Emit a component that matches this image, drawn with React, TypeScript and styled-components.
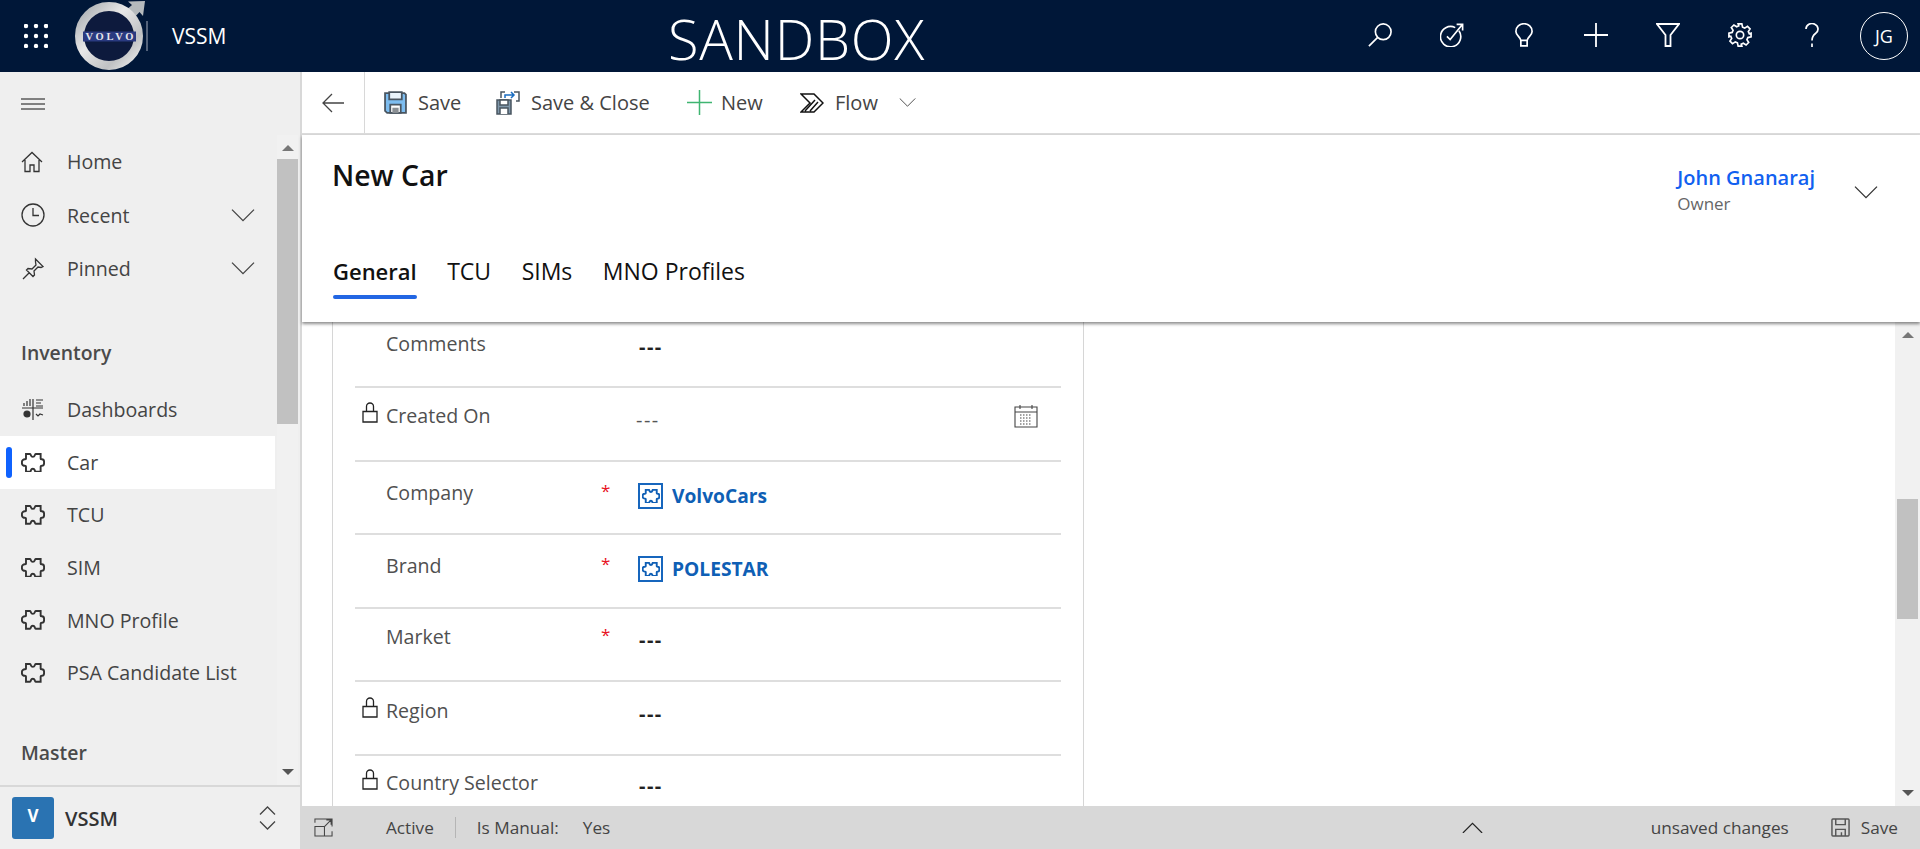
import React from 'react';
import styled, { createGlobalStyle } from 'styled-components';

const FONT = '"Open Sans", "Noto Sans", "Liberation Sans", sans-serif';

const GlobalStyle = createGlobalStyle`
  html, body, #root {
    margin: 0;
    height: 100%;
    overflow: hidden;
  }
  body {
    font-family: ${FONT};
    color: #333;
  }
  * {
    box-sizing: border-box;
  }
`;

const Page = styled.div`
  height: 849px;
  display: flex;
  flex-direction: column;
`;

/* top bar */
const TopBar = styled.header`
  height: 72px;
  flex: none;
  display: flex;
  align-items: center;
  background-color: #001738;
  color: #fff;
`;

const Waffle = styled.svg`
  width: 24px;
  height: 24px;
  margin-left: 24px;
  flex: none;
`;

const LogoMark = styled.svg`
  width: 74px;
  height: 72px;
  margin-left: 26px;
  flex: none;
`;

const TopDivider = styled.div`
  width: 2px;
  height: 30px;
  margin-left: -2px;
  background-color: #53627a;
  flex: none;
`;

const AppName = styled.div`
  margin-left: 24px;
  font-size: 21px;
  width: 133px;
  flex: none;
`;

const Environment = styled.div`
  font-size: 56px;
  font-weight: 300;
  line-height: 64px;
  letter-spacing: 0.7px;
  flex: none;
  margin-left: 363px;
  margin-top: 4px;
`;

const TopActions = styled.div`
  margin-left: auto;
  display: flex;
  align-items: center;
  padding-right: 12px;
`;

const TopAction = styled.div`
  width: 72px;
  height: 72px;
  display: flex;
  align-items: center;
  justify-content: center;
  padding-bottom: 3px;
`;

const Avatar = styled.div`
  width: 48px;
  height: 48px;
  margin-left: 12px;
  border: 1px solid #fff;
  border-radius: 50%;
  display: flex;
  align-items: center;
  justify-content: center;
  font-size: 18px;
`;

const Glyph = styled.svg`
  flex: none;
  fill: none;
  stroke: currentColor;
  stroke-width: 1.3;
  display: block;
`;

/* body */
const Body = styled.div`
  flex: 1;
  min-height: 0;
  display: flex;
`;

const Sidebar = styled.aside`
  width: 302px;
  flex: none;
  display: flex;
  flex-direction: column;
  background-color: #efefef;
  border-right: 2px solid #d8d8d8;
`;

const MenuButton = styled.div`
  height: 63px;
  flex: none;
  padding: 26px 0 0 21px;
  color: #111;
`;

const SideScroll = styled.div`
  flex: 1;
  min-height: 0;
  display: flex;
  overflow: hidden;
`;

const NavList = styled.nav`
  width: 275px;
  flex: none;
`;

const NavRow = styled.div<{ $active?: boolean; $height: number }>`
  height: ${(props) => props.$height}px;
  display: flex;
  align-items: center;
  position: relative;
  padding: 0 0 0 21px;
  font-size: 19.6px;
  color: #444;
  background-color: ${(props) => (props.$active ? '#fff' : 'transparent')};

  ${(props) =>
    props.$active &&
    `&::before {
      content: '';
      position: absolute;
      left: 6px;
      top: 11px;
      width: 6px;
      height: 31px;
      border-radius: 3px;
      background-color: #0f62fe;
    }`}
`;

const NavIcon = styled.span`
  width: 46px;
  flex: none;
  color: #333;
`;

const NavChevron = styled.span`
  margin-left: auto;
  margin-right: 20px;
  color: #444;
`;

const NavSection = styled.div<{ $top: number; $bottom?: number }>`
  margin-top: ${(props) => props.$top}px;
  margin-bottom: ${(props) => props.$bottom || 0}px;
  padding-left: 21px;
  height: 41px;
  display: flex;
  align-items: center;
  font-size: 19.4px;
  font-weight: 600;
  color: #4a4a4a;
`;

const Track = styled.div<{ $width: number; $side: number }>`
  width: ${(props) => props.$width}px;
  margin-left: ${(props) => props.$side}px;
  flex: none;
  display: flex;
  flex-direction: column;
  align-items: center;
  background-color: #f1f1f1;
`;

const TrackArrow = styled.div<{ $down?: boolean }>`
  flex: none;
  width: 0;
  height: 0;
  margin: ${(props) => (props.$down ? '0 0 10px' : '10px 0 0')};
  border-left: 6px solid transparent;
  border-right: 6px solid transparent;
  ${(props) =>
    props.$down ? 'border-top: 6px solid #555;' : 'border-bottom: 6px solid #777;'}
`;

const TrackLane = styled.div<{ $top: number }>`
  flex: 1;
  align-self: stretch;
  padding-top: ${(props) => props.$top}px;
`;

const TrackThumb = styled.div<{ $height: number; $inset: number }>`
  height: ${(props) => props.$height}px;
  margin: 0 ${(props) => props.$inset}px;
  background-color: #c1c1c1;
`;

const AreaSwitcher = styled.div`
  height: 64px;
  flex: none;
  display: flex;
  align-items: center;
  padding: 0 24px 0 12px;
  border-top: 2px solid #d8d8d8;
`;

const AreaBadge = styled.div`
  width: 42px;
  height: 42px;
  border-radius: 3px;
  background-color: #2a73b2;
  color: #fff;
  font-size: 17px;
  font-weight: 700;
  display: flex;
  align-items: center;
  justify-content: center;
  padding-bottom: 6px;
`;

const AreaName = styled.div`
  margin-left: 11px;
  font-size: 20px;
  font-weight: 600;
  color: #333;
`;

const AreaToggle = styled.div`
  margin-left: auto;
  color: #444;
`;

/* main column */
const Main = styled.main`
  flex: 1;
  min-width: 0;
  display: flex;
  flex-direction: column;
`;

const CommandBar = styled.div`
  height: 63px;
  flex: none;
  display: flex;
  align-items: center;
  border-bottom: 2px solid #dcdcdc;
  font-size: 20px;
  color: #444;
`;

const BackButton = styled.div`
  width: 63px;
  height: 61px;
  flex: none;
  display: flex;
  align-items: center;
  margin-right: 19px;
  padding-left: 20px;
  border-right: 1px solid #d8d8d8;
  color: #444;
`;

const Command = styled.div<{ $width: number; $gap?: number }>`
  width: ${(props) => props.$width}px;
  flex: none;
  display: flex;
  align-items: center;
  gap: ${(props) => props.$gap || 11}px;
`;

const CommandIcon = styled.span<{ $color?: string }>`
  color: ${(props) => props.$color || '#333'};
  display: block;
`;

const RecordHeader = styled.div`
  height: 187px;
  flex: none;
  position: relative;
  z-index: 1;
  padding: 0 30px;
  background-color: #fff;
  box-shadow: 0 2px 3px rgba(0, 0, 0, 0.45);
  display: flex;
  flex-direction: column;
`;

const TitleRow = styled.div`
  height: 110px;
  flex: none;
  display: flex;
  justify-content: space-between;
`;

const Title = styled.h1`
  margin: 20px 0 0;
  font-size: 28.4px;
  line-height: 40px;
  font-weight: 600;
  color: #111;
`;

const OwnerBlock = styled.div`
  display: flex;
  align-items: center;
  gap: 39px;
  margin: 28px 12px 0 0;
  height: 60px;
`;

const OwnerText = styled.div`
  margin-bottom: 8px;
`;

const OwnerName = styled.div`
  font-size: 20px;
  font-weight: 600;
  line-height: 30px;
  color: #1160f0;
`;

const OwnerRole = styled.div`
  font-size: 17px;
  line-height: 22px;
  color: #666;
`;

const Tabs = styled.div`
  display: flex;
  gap: 30.5px;
  margin-left: 1px;
`;

const Tab = styled.div<{ $active?: boolean }>`
  height: 62px;
  padding-top: 11px;
  position: relative;
  font-size: ${(props) => (props.$active ? 22 : 23)}px;
  line-height: 30px;
  color: #111;
  font-weight: ${(props) => (props.$active ? 600 : 400)};

  ${(props) =>
    props.$active &&
    `&::after {
      content: '';
      position: absolute;
      left: 0;
      right: 0;
      top: 50px;
      height: 4px;
      border-radius: 2px;
      background-color: #2266e3;
    }`}
`;

const ContentArea = styled.div`
  flex: 1;
  min-height: 0;
  display: flex;
  background-color: #fff;
`;

const FormGutter = styled.div`
  width: 30px;
  flex: none;
`;

const FormCard = styled.section`
  width: 752px;
  flex: none;
  padding: 0 22px;
  overflow: hidden;
  border-left: 1px solid #d6d6d6;
  border-right: 1px solid #d6d6d6;
`;

const FormRow = styled.div<{ $height: number; $pad: number }>`
  height: ${(props) => props.$height}px;
  padding-top: ${(props) => props.$pad}px;
  display: grid;
  grid-template-columns: 31px 214px 38px 1fr auto;
  align-items: start;
  border-bottom: 2px solid #dedede;

  &:last-child {
    border-bottom: 0;
  }
`;

const LockCell = styled.div`
  margin-top: -2px;
  padding-left: 7px;
  color: #222;
`;

const FieldLabel = styled.div`
  font-size: 19.6px;
  line-height: 24px;
  color: #505050;
`;

const Required = styled.div`
  font-size: 17px;
  line-height: 20px;
  color: #e81123;
  padding-left: 1px;
`;

const FieldValue = styled.div<{ $muted?: boolean }>`
  padding-top: ${(props) => (props.$muted ? 4 : 3)}px;
  margin-left: ${(props) => (props.$muted ? -2 : 1)}px;
  font-size: 20px;
  line-height: 24px;
  letter-spacing: 1.5px;
  font-weight: ${(props) => (props.$muted ? 400 : 700)};
  color: ${(props) => (props.$muted ? '#555' : '#222')};
`;

const LookupLink = styled.div`
  display: flex;
  align-items: center;
  gap: 9px;
  padding-top: 2px;
  font-size: 19.2px;
  font-weight: 700;
  line-height: 26px;
  color: #0f5fb5;
`;

const LookupIcon = styled.span`
  width: 25px;
  height: 26px;
  flex: none;
  display: flex;
  align-items: center;
  justify-content: center;
  border: 2.5px solid #1766bd;
`;

const CalendarCell = styled.div`
  padding-right: 23px;
  color: #444;
`;

const ContentFill = styled.div`
  flex: 1;
`;

const StatusBar = styled.footer`
  height: 43px;
  flex: none;
  display: flex;
  align-items: center;
  background-color: #d8d8d8;
  font-size: 17.2px;
  color: #444;
`;

const StatusExpand = styled.div`
  width: 84px;
  flex: none;
  padding-left: 12px;
`;

const StatusDivider = styled.div`
  width: 1px;
  height: 21px;
  margin: 0 21px;
  background-color: #b5b5b5;
`;

const StatusKey = styled.div`
  width: 106px;
  flex: none;
`;

const StatusCollapse = styled.div`
  margin-left: 852px;
  color: #222;
`;

const StatusRight = styled.div`
  margin-left: auto;
  padding-right: 22px;
  display: flex;
  align-items: center;
`;

const StatusSave = styled.div`
  margin-left: 42px;
  display: flex;
  align-items: center;
  gap: 11px;
`;

/* drawings */
const Puzzle = ({ size = 24 }: { size?: number }) => (
  <Glyph width={size} height={size * 0.82} viewBox="22 22 77 63" style={{ strokeWidth: (77 / size) * 1.9 }}>
    <path d="M38 25h13c2 0 2 2 3 5 2 6 10 6 12 0 1-3 1-5 3-5h16v15c0 2 2 2 4 2 4 0 7 3 7 8v5c0 5-3 8-7 8-2 0-4 0-4 2v17H69c-2 0-2-2-3-5-2-6-10-6-12 0-1 3-1 5-3 5H38V65c0-2-2-2-4-2-4 0-9-3-9-8v-5c0-5 5-8 9-8 2 0 4 0 4-2z" />
  </Glyph>
);

const Chevron = ({ size = 24, up = false }: { size?: number; up?: boolean }) => (
  <Glyph width={size} height={size * 0.55} viewBox="0 0 24 13">
    <path d={up ? 'M1 12.5 12 1.5l11 11' : 'M1 .5l11 11 11-11'} />
  </Glyph>
);

const SaveIcon = ({ size = 23 }: { size?: number }) => (
  <Glyph width={size} height={size} viewBox="0 0 22 22" style={{ stroke: '#4a5560', strokeWidth: 1.7 }}>
    <path d="M1 2h18.500L21 3.500V21H3l-2-2z" fill="#7dbdf0" />
    <path d="M5 1h12v7H5z" fill="#eaf4fc" />
    <path d="M6 21v-8h10v8z" fill="#fff" />
    <path d="M8 16h6v5H8z" fill="#8a8f94" stroke="none" />
  </Glyph>
);

const PlainSaveIcon = () => (
  <Glyph width={19} height={19} viewBox="0 0 20 20" style={{ stroke: '#555', strokeWidth: 1.5 }}>
    <path d="M1 2a1 1 0 0 1 1-1h16a1 1 0 0 1 1 1v16a1 1 0 0 1-1 1H2a1 1 0 0 1-1-1z" />
    <path d="M5 1v6h10V1M5 19v-7h10v7M11 15v4" />
  </Glyph>
);

const Lock = () => (
  <Glyph width={16} height={21} viewBox="0 0 16 21">
    <path d="M1 9.500h14V20H1zM4.500 9.500V4.500a3.500 3.500 0 0 1 7 0v5" />
  </Glyph>
);

const LogoImage = () => (
  <LogoMark viewBox="0 0 74 72">
    <defs>
      <linearGradient id="ring" x1="0" y1="0" x2="1" y2="1">
        <stop offset="0" stopColor="#a5a9ad" />
        <stop offset="0.4" stopColor="#e8e8e8" />
        <stop offset="0.75" stopColor="#bfc1c3" />
        <stop offset="1" stopColor="#eeeeee" />
      </linearGradient>
    </defs>
    <path d="M50 12 58 5 54 1.500 71 1 69 16 65.500 12 58 20z" fill="#b5babd" />
    <circle cx="35" cy="36" r="29.500" fill="#0d1a3d" stroke="url(#ring)" strokeWidth="9" />
    <rect x="9" y="31.500" width="53" height="10" fill="#2a3a80" />
    <text x="11.500" y="40" textLength="48" lengthAdjust="spacing" fontFamily="Liberation Serif, serif" fontWeight="700" fontSize="10.500" fill="#e4e4ea">
      VOLVO
    </text>
  </LogoMark>
);

const Scrollbar = ({
  width,
  side,
  top,
  thumb,
  inset,
}: {
  width: number;
  side: number;
  top: number;
  thumb: number;
  inset: number;
}) => (
  <Track $width={width} $side={side}>
    <TrackArrow />
    <TrackLane $top={top}>
      <TrackThumb $height={thumb} $inset={inset} />
    </TrackLane>
    <TrackArrow $down />
  </Track>
);

const pinIcon = (
  <Glyph width={24} height={24} viewBox="0 0 24 24">
    <path d="M14.500 2 22 9.500l-2 1-3-.5-4 4 .5 4-1.500 1.500-6.500-6.500L7 11.500l4 .5 4-4-.5-3zM8.500 15.500 2 22" />
  </Glyph>
);

const TOP_ACTIONS = [
  <Glyph key="search" width={24} height={24} viewBox="0 0 26 26" style={{ strokeWidth: 1.8 }}>
    <circle cx="16.500" cy="9.500" r="8.500" />
    <path d="M10.500 15.500 1 25" />
  </Glyph>,
  <Glyph key="target" width={24} height={24} viewBox="0 0 26 26" style={{ strokeWidth: 1.8 }}>
    <path d="M20.500 8.500a11 11 0 1 1-4-3.500" />
    <path d="M7.500 14.500l3.500 3.500 13-16M18 1.500h6.500V8" />
  </Glyph>,
  <Glyph key="idea" width={18} height={24} viewBox="0 0 20 26" style={{ strokeWidth: 1.9 }}>
    <path d="M6.500 19C6 15 1 13.500 1 9a9 8.500 0 0 1 18 0c0 4.500-5 6-5.500 10zM6.500 19v6h7v-6" />
  </Glyph>,
  <Glyph key="plus" width={24} height={24} viewBox="0 0 24 24" style={{ strokeWidth: 1.8 }}>
    <path d="M12 0v24M0 12h24" />
  </Glyph>,
  <Glyph key="filter" width={24} height={24} viewBox="0 0 24 24" style={{ strokeWidth: 1.8 }}>
    <path d="M1 1h22l-8.500 11v11h-5V12z" />
  </Glyph>,
  <Glyph key="gear" width={24} height={24} viewBox="0 0 26 26" style={{ strokeWidth: 1.8 }}>
    <circle cx="13" cy="13" r="4" />
    <path d="M11 1h4l.8 3.500 2.300 1 3-1.900 2.800 2.800-1.900 3 1 2.300L25 11v4l-3.500.8-1 2.300 1.900 3-2.800 2.800-3-1.900-2.300 1L15 25h-4l-.8-3.500-2.300-1-3 1.900-2.800-2.800 1.900-3-1-2.300L1 15v-4l3.500-.8 1-2.300-1.900-3 2.800-2.800 3 1.900 2.300-1z" />
  </Glyph>,
  <Glyph key="help" width={14} height={24} viewBox="0 0 14 24" style={{ strokeWidth: 1.7 }}>
    <path d="M1 6a6 5.500 0 1 1 9.500 4.500C8 12.500 7 14 7 17.500M7 20.500V24" />
  </Glyph>,
];

const NAV_TOP = [
  {
    text: 'Home',
    icon: (
      <Glyph width={22} height={22} viewBox="0 0 22 22">
        <path d="M1 11 11 1.500 21 11M4 9v11.500h5V14h4v6.500h5V9" />
      </Glyph>
    ),
  },
  {
    text: 'Recent',
    chevron: true,
    icon: (
      <Glyph width={24} height={24} viewBox="0 0 24 24">
        <circle cx="12" cy="12" r="11" />
        <path d="M12 5v7.500h6" />
      </Glyph>
    ),
  },
  { text: 'Pinned', chevron: true, icon: pinIcon },
];

const NAV_INVENTORY = [
  {
    text: 'Dashboards',
    icon: (
      <Glyph width={23} height={23} viewBox="0 0 23 23" style={{ strokeWidth: 1.2 }}>
        <path d="M3 8V5M6 8V3M9 8V1M12 1v21M1 10h21M15 2h7M15 5h5M15 8h7M15 16l2 2 2-2 3 1" />
        <circle cx="6" cy="16" r="3" fill="currentColor" />
      </Glyph>
    ),
  },
  { text: 'Car', active: true, icon: <Puzzle /> },
  { text: 'TCU', icon: <Puzzle /> },
  { text: 'SIM', icon: <Puzzle /> },
  { text: 'MNO Profile', icon: <Puzzle /> },
  { text: 'PSA Candidate List', icon: <Puzzle /> },
];

const App = () => {
  return (
    <Page>
      <GlobalStyle />
      <TopBar>
        <Waffle viewBox="0 0 24 24" fill="#fff">
          {[2, 12, 22].map((y) =>
            [2, 12, 22].map((x) => <circle key={`${x}-${y}`} cx={x} cy={y} r="2.200" />)
          )}
        </Waffle>
        <LogoImage />
        <TopDivider />
        <AppName>VSSM</AppName>
        <Environment>SANDBOX</Environment>
        <TopActions>
          {TOP_ACTIONS.map((icon) => (
            <TopAction key={icon.key}>{icon}</TopAction>
          ))}
          <Avatar>JG</Avatar>
        </TopActions>
      </TopBar>

      <Body>
        <Sidebar>
          <MenuButton>
            <Glyph width={24} height={12} viewBox="0 0 24 12" style={{ strokeWidth: 1 }}>
              <path d="M0 1h24M0 6h24M0 11h24" />
            </Glyph>
          </MenuButton>
          <SideScroll>
            <NavList>
              {NAV_TOP.map((item) => (
                <NavRow key={item.text} $height={53.5}>
                  <NavIcon>{item.icon}</NavIcon>
                  {item.text}
                  {item.chevron && (
                    <NavChevron>
                      <Chevron />
                    </NavChevron>
                  )}
                </NavRow>
              ))}
              <NavSection $top={36.5} $bottom={10.5}>
                Inventory
              </NavSection>
              {NAV_INVENTORY.map((item) => (
                <NavRow key={item.text} $active={item.active} $height={52.6}>
                  <NavIcon>{item.icon}</NavIcon>
                  {item.text}
                </NavRow>
              ))}
              <NavSection $top={33}>Master</NavSection>
            </NavList>
            <Scrollbar width={21} side={2} top={8} thumb={265} inset={0} />
          </SideScroll>
          <AreaSwitcher>
            <AreaBadge>V</AreaBadge>
            <AreaName>VSSM</AreaName>
            <AreaToggle>
              <Glyph width={17} height={26} viewBox="0 0 17 26">
                <path d="M1 9.500 8.500 2 16 9.500M1 16.500 8.500 24 16 16.500" />
              </Glyph>
            </AreaToggle>
          </AreaSwitcher>
        </Sidebar>

        <Main>
          <CommandBar>
            <BackButton>
              <Glyph width={22} height={20} viewBox="0 0 22 20">
                <path d="M22 10H1M10 1l-9 9 9 9" />
              </Glyph>
            </BackButton>
            <Command $width={112}>
              <SaveIcon />
              Save
            </Command>
            <Command $width={191}>
              <CommandIcon>
                <Glyph width={24} height={24} viewBox="0 0 24 24" style={{ stroke: '#4a5560', strokeWidth: 1.5 }}>
                  <path d="M1 9h14v14H1z" fill="#7f97aa" />
                  <path d="M4 9h8v5H4zM4 23v-6h8v6" fill="#fff" />
                  <path d="M5 7V1h4M18 1h5v9h-3" />
                  <path d="M9 7V4h9M15 1l3 3-3 3" style={{ stroke: '#1b6ec2' }} />
                </Glyph>
              </CommandIcon>
              Save &amp; Close
            </Command>
            <Command $width={113} $gap={9}>
              <CommandIcon $color="#3fb571">
                <Glyph width={25} height={25} viewBox="0 0 25 25" style={{ strokeWidth: 1.5 }}>
                  <path d="M12.500 0v25M0 12.500h25" />
                </Glyph>
              </CommandIcon>
              New
            </Command>
            <Command $width={99}>
              <CommandIcon $color="#111">
                <Glyph width={24} height={20} viewBox="0 0 24 20" style={{ strokeWidth: 1.5 }}>
                  <path d="M1 1h13l9 9-9 9H1l9-9zM5 18 15 7M10 18l8-9" />
                </Glyph>
              </CommandIcon>
              Flow
            </Command>
            <CommandIcon $color="#444">
              <Chevron size={17} />
            </CommandIcon>
          </CommandBar>

          <RecordHeader>
            <TitleRow>
              <Title>New Car</Title>
              <OwnerBlock>
                <OwnerText>
                  <OwnerName>John Gnanaraj</OwnerName>
                  <OwnerRole>Owner</OwnerRole>
                </OwnerText>
                <Chevron />
              </OwnerBlock>
            </TitleRow>
            <Tabs>
              <Tab $active>General</Tab>
              <Tab>TCU</Tab>
              <Tab>SIMs</Tab>
              <Tab>MNO Profiles</Tab>
            </Tabs>
          </RecordHeader>

          <ContentArea>
            <FormGutter />
            <FormCard>
              <FormRow $height={66} $pad={10}>
                <span />
                <FieldLabel>Comments</FieldLabel>
                <span />
                <FieldValue>---</FieldValue>
              </FormRow>
              <FormRow $height={74} $pad={16}>
                <LockCell>
                  <Lock />
                </LockCell>
                <FieldLabel>Created On</FieldLabel>
                <span />
                <FieldValue $muted>---</FieldValue>
                <CalendarCell>
                  <Glyph width={24} height={24} viewBox="0 0 24 24" style={{ strokeWidth: 1.1 }}>
                    <path d="M1 3h22v20H1zM1 8h22M6 1v4M18 1v4" />
                    <path d="M6 11h12M6 14h12M6 17h12M6 20h12" strokeDasharray="1.500 1.500" />
                  </Glyph>
                </CalendarCell>
              </FormRow>
              <FormRow $height={73} $pad={19}>
                <span />
                <FieldLabel>Company</FieldLabel>
                <Required>*</Required>
                <LookupLink>
                  <LookupIcon>
                    <Puzzle size={18} />
                  </LookupIcon>
                  VolvoCars
                </LookupLink>
              </FormRow>
              <FormRow $height={74} $pad={19}>
                <span />
                <FieldLabel>Brand</FieldLabel>
                <Required>*</Required>
                <LookupLink>
                  <LookupIcon>
                    <Puzzle size={18} />
                  </LookupIcon>
                  POLESTAR
                </LookupLink>
              </FormRow>
              <FormRow $height={73} $pad={16}>
                <span />
                <FieldLabel>Market</FieldLabel>
                <Required>*</Required>
                <FieldValue>---</FieldValue>
              </FormRow>
              <FormRow $height={74} $pad={17}>
                <LockCell>
                  <Lock />
                </LockCell>
                <FieldLabel>Region</FieldLabel>
                <span />
                <FieldValue>---</FieldValue>
              </FormRow>
              <FormRow $height={74} $pad={15}>
                <LockCell>
                  <Lock />
                </LockCell>
                <FieldLabel>Country Selector</FieldLabel>
                <span />
                <FieldValue>---</FieldValue>
              </FormRow>
            </FormCard>
            <ContentFill />
            <Scrollbar width={25} side={0} top={161} thumb={120} inset={2} />
          </ContentArea>

          <StatusBar>
            <StatusExpand>
              <Glyph width={19} height={19} viewBox="0 0 20 20" style={{ strokeWidth: 1.1 }}>
                <path d="M1 19V9h10v10zM1 19h18v-5M1 5V1h18v8M11 9l7-7M13 2h5v5" />
              </Glyph>
            </StatusExpand>
            Active
            <StatusDivider />
            <StatusKey>Is Manual:</StatusKey>
            Yes
            <StatusCollapse>
              <Chevron size={21} up />
            </StatusCollapse>
            <StatusRight>
              unsaved changes
              <StatusSave>
                <PlainSaveIcon />
                Save
              </StatusSave>
            </StatusRight>
          </StatusBar>
        </Main>
      </Body>
    </Page>
  );
};

export default App;
